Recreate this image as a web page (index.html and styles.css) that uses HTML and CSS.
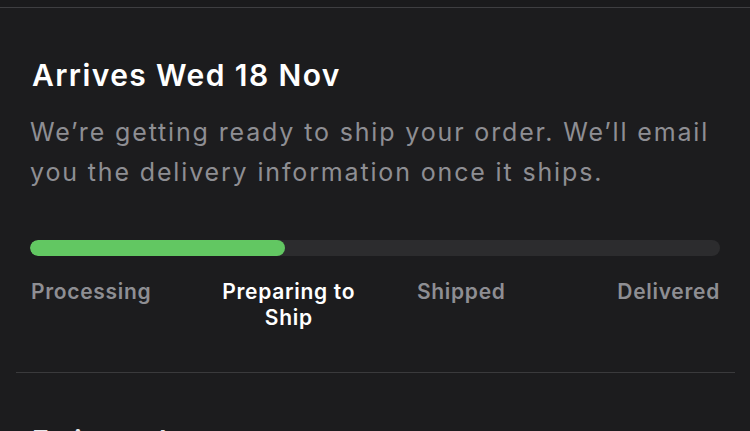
FILE: index.html
```html
<!DOCTYPE html>
<html lang="en">
<head>
  <meta charset="UTF-8">
  <meta name="viewport" content="width=device-width, initial-scale=1.0">
  <title>Order Status</title>
  <link rel="stylesheet" href="styles.css">
</head>
<body>
  <div class="top-strip"></div>

  <section class="status-card">
    <h2 class="arrival">Arrives Wed 18 Nov</h2>
    <p class="status-text">We’re getting ready to ship your order. We’ll email you the delivery information once it ships.</p>

    <div class="track">
      <div class="track-fill" style="width: 37%;"></div>
    </div>

    <div class="steps">
      <span class="step first">Processing</span>
      <span class="step current">Preparing to Ship</span>
      <span class="step">Shipped</span>
      <span class="step last">Delivered</span>
    </div>
  </section>

  <hr class="divider">

  <section class="next-section">
    <h3>Estimated</h3>
  </section>
</body>
</html>
```

FILE: styles.css
```css
* {
  box-sizing: border-box;
  margin: 0;
  padding: 0;
}

html, body {
  height: 100%;
  overflow: hidden;
}

body {
  background: #1c1c1e;
  font-family: Inter, "Noto Sans", sans-serif;
  color: #fff;
}

.top-strip {
  height: 8px;
  background: #1a1a1c;
  border-bottom: 1px solid #3e3e41;
}

.status-card {
  padding: 49px 30px 0 30px;
}

.arrival {
  font-size: 30px;
  font-weight: 600;
  line-height: 36px;
  padding-left: 2px;
  letter-spacing: 1.4px;
}

.status-text {
  margin-top: 19px;
  font-size: 25px;
  line-height: 40px;
  color: #8e8e93;
  letter-spacing: 1.85px;
}

.track {
  margin-top: 48px;
  height: 16px;
  border-radius: 8px;
  background: #2c2c2e;
  overflow: hidden;
}

.track-fill {
  height: 100%;
  border-radius: 8px;
  background: #62c762;
}

.steps {
  margin-top: 23px;
  display: grid;
  grid-template-columns: repeat(4, 1fr);
  font-size: 21px;
  font-weight: 600;
  line-height: 26px;
  color: #8e8e93;
  text-align: center;
  letter-spacing: 0.7px;
}

.step {
  padding: 0 8px;
}

.step.first {
  text-align: left;
  padding-left: 1px;
}

.step.last {
  text-align: right;
  padding-right: 0;
}

.step.current {
  color: #fff;
}

.divider {
  margin: 41px 15px 0 16px;
  border: none;
  border-top: 1px solid #3a3a3c;
}

.next-section {
  padding: 51px 32px 0 32px;
}

.next-section h3 {
  font-size: 28px;
  font-weight: 600;
  line-height: 34px;
  color: #e5e5ea;
}
```
